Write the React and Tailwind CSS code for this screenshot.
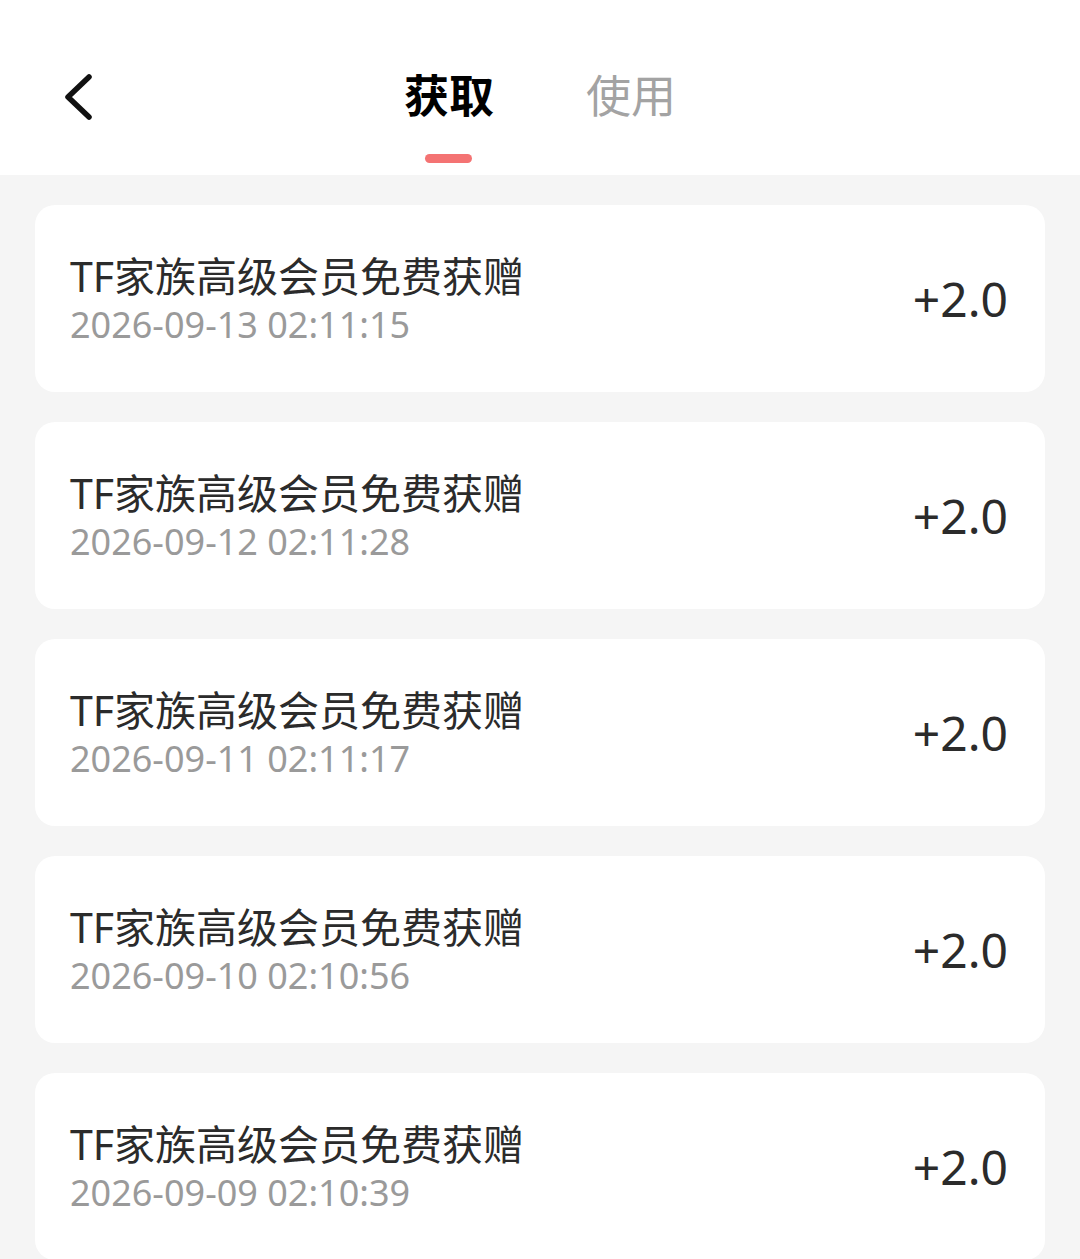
const records = [
    { title: 'TF家族高级会员免费获赠', time: '2026-09-13 02:11:15', amount: '+2.0' },
    { title: 'TF家族高级会员免费获赠', time: '2026-09-12 02:11:28', amount: '+2.0' },
    { title: 'TF家族高级会员免费获赠', time: '2026-09-11 02:11:17', amount: '+2.0' },
    { title: 'TF家族高级会员免费获赠', time: '2026-09-10 02:10:56', amount: '+2.0' },
    { title: 'TF家族高级会员免费获赠', time: '2026-09-09 02:10:39', amount: '+2.0' },
];

const App = () => {
    return (
        <div
            className="min-h-[1259px] bg-[#f5f5f5]"
            style={{ fontFamily: '"Noto Sans", "Noto Sans CJK SC", sans-serif' }}
        >
            {/* Header */}
            <div className="h-[175px] bg-white grid grid-cols-[1fr_auto_1fr]">
                <div className="flex items-start pt-[72px] pl-[58px]">
                    <svg width="42" height="50" viewBox="0 0 42 50" fill="none">
                        <path d="M31 5 L10 25 L31 45" stroke="#111" strokeWidth="5.5" strokeLinecap="round" strokeLinejoin="round" />
                    </svg>
                </div>
                <div className="flex gap-[92px] pt-[64px]">
                    <div className="flex flex-col items-center">
                        <span className="text-[45px] leading-[60px] font-bold text-black" style={{ fontFamily: '"Noto Sans CJK SC", sans-serif' }}>获取</span>
                        <span className="mt-[30px] w-[47px] h-[9px] rounded-full bg-[#f47373]" />
                    </div>
                    <div className="flex flex-col items-center">
                        <span className="text-[45px] leading-[60px] text-[#a3a3a3]" style={{ fontFamily: '"Noto Sans CJK SC", sans-serif' }}>使用</span>
                    </div>
                </div>
                <div />
            </div>

            {/* List */}
            <div className="px-[35px] pt-[30px] flex flex-col gap-[30px]">
                {records.map((r, i) => (
                    <div key={i} className="h-[187px] bg-white rounded-[20px] flex items-center justify-between pl-[35px] pr-[37px]">
                        <div className="flex flex-col">
                            <span className="text-[41px] leading-[52px] text-[#2b2b2b]">{r.title}</span>
                            <span className="text-[36px] leading-[46px] text-[#9a9a9a]">{r.time}</span>
                        </div>
                        <span className="text-[48px] leading-[60px] text-[#2b2b2b]">{r.amount}</span>
                    </div>
                ))}
            </div>
        </div>
    );
};

export default App;
